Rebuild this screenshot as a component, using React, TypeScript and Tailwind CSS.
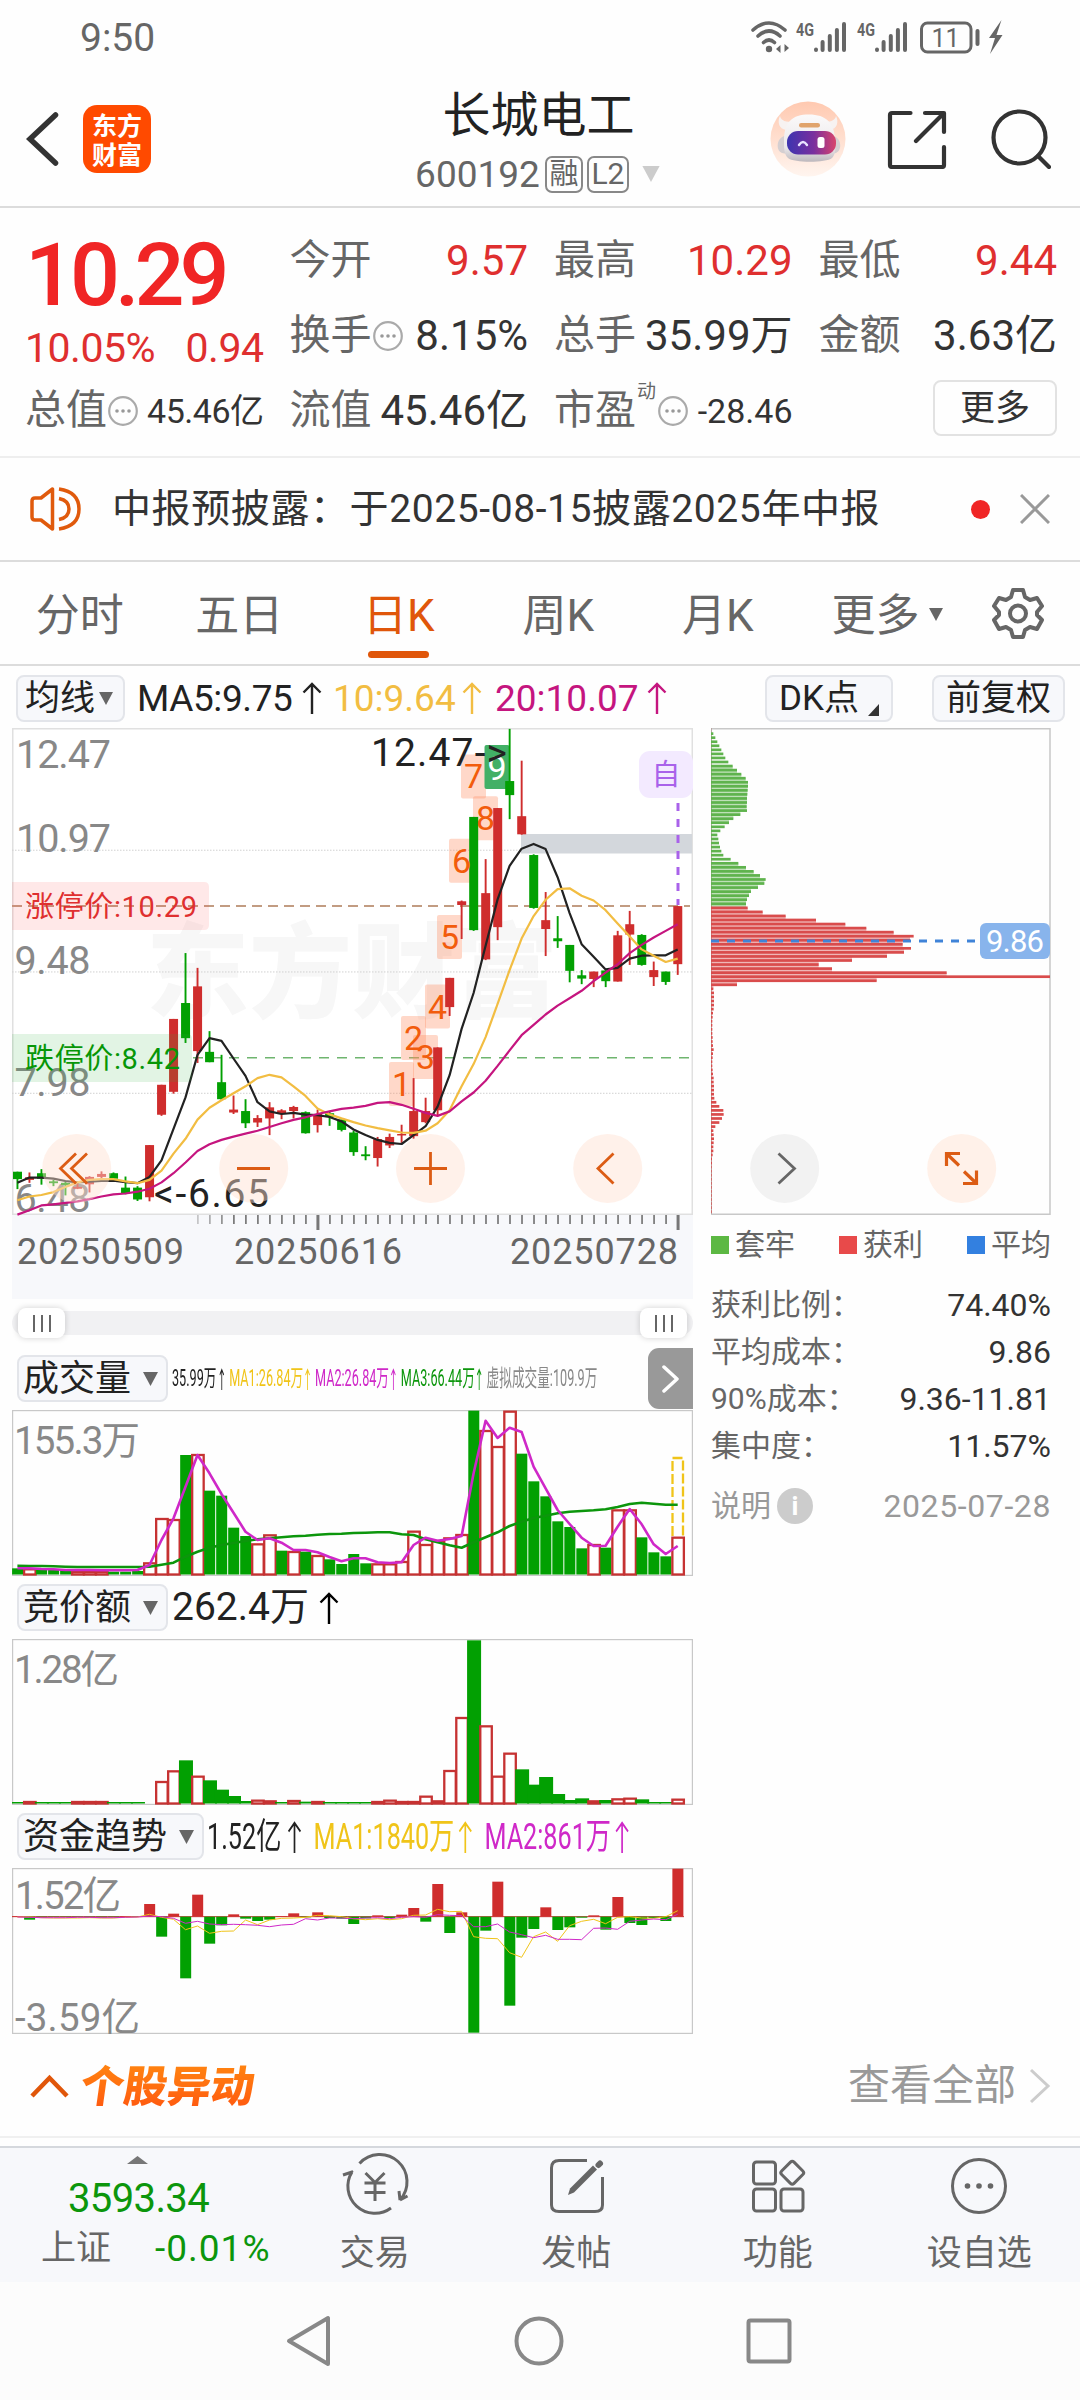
import type { ReactNode } from "react";

type Candle = [dir: "r" | "g", top: number, bottom: number, high: number, low: number];

const STEP = 12.005;
const cx = (i: number) => 17.4 + i * STEP;

const candles: Candle[] = [
  ["g", 1221, 1241, 1221, 1268], ["r", 1236, 1243, 1223, 1251], ["g", 1225, 1240, 1214, 1256],
  ["g", 1247, 1252, 1243, 1260], ["g", 1251, 1257, 1248, 1285], ["r", 1262, 1267, 1250, 1268],
  ["r", 1235, 1255, 1233, 1277], ["r", 1227, 1235, 1220, 1240], ["g", 1225, 1240, 1223, 1240],
  ["g", 1264, 1280, 1234, 1282], ["g", 1264, 1296, 1260, 1300], ["r", 1149, 1290, 1149, 1301],
  ["r", 986, 1067, 986, 1070], ["r", 808, 1005, 808, 1010], ["g", 765, 860, 630, 873],
  ["r", 720, 895, 670, 927], ["g", 897, 925, 841, 925], ["g", 979, 1025, 905, 1027],
  ["r", 1053, 1061, 1015, 1065], ["g", 1057, 1090, 1025, 1103], ["r", 1076, 1088, 1068, 1100],
  ["r", 1047, 1077, 1033, 1122], ["r", 1055, 1063, 1052, 1079], ["r", 1046, 1057, 1043, 1077],
  ["g", 1060, 1117, 1058, 1118], ["r", 1065, 1095, 1053, 1115], ["g", 1063, 1073, 1058, 1097],
  ["g", 1080, 1108, 1080, 1112], ["g", 1115, 1168, 1110, 1178], ["g", 1174, 1179, 1152, 1190],
  ["r", 1133, 1184, 1127, 1207], ["r", 1127, 1150, 1118, 1157], ["r", 1119, 1123, 1094, 1143],
  ["r", 1057, 1125, 968, 1132], ["r", 1057, 1087, 1021, 1090], ["r", 885, 1055, 885, 1068],
  ["r", 697, 776, 697, 800], ["r", 490, 500, 488, 592], ["g", 262, 568, 262, 570],
  ["r", 468, 647, 376, 649], ["r", 238, 560, 238, 595], ["g", 165, 203, 24, 268],
  ["r", 260, 309, 110, 310], ["g", 365, 508, 363, 510], ["r", 541, 565, 465, 638],
  ["g", 590, 598, 530, 616], ["g", 608, 678, 608, 709], ["g", 690, 699, 676, 714],
  ["r", 680, 700, 680, 722], ["g", 677, 706, 677, 722], ["r", 582, 707, 570, 707],
  ["r", 552, 580, 516, 662], ["g", 581, 662, 579, 664], ["r", 676, 695, 653, 719],
  ["g", 680, 708, 680, 716], ["r", 503, 660, 503, 689],
];

const ma5 = [
  1251, 1237, 1237, 1240, 1246, 1250, 1248, 1246, 1245, 1249, 1252, 1235, 1190, 1105, 1020, 905, 860, 867, 915,
  962, 1033, 1058, 1065, 1062, 1067, 1068, 1073, 1085, 1107, 1122, 1135, 1143, 1146, 1122, 1098, 1045, 960, 835,
  738, 610, 485, 394, 348, 335, 349, 425, 522, 606, 640, 674, 670, 645, 637, 636, 636, 620,
];
const ma10 = [
  1298, 1288, 1284, 1276, 1262, 1250, 1243, 1241, 1241, 1247, 1252, 1243, 1218, 1172, 1132, 1080, 1048, 1028,
  1009, 990, 968, 959, 966, 990, 1016, 1050, 1066, 1077, 1087, 1096, 1103, 1109, 1115, 1116, 1110, 1090, 1055,
  990, 930, 857, 767, 676, 591, 530, 486, 457, 455, 475, 488, 514, 550, 585, 620, 637, 654, 645,
];
const ma20 = [
  1337, 1325, 1312, 1309, 1305, 1301, 1295, 1288, 1282, 1280, 1275, 1267, 1250, 1225, 1196, 1165, 1147, 1135,
  1126, 1118, 1110, 1100, 1090, 1081, 1074, 1065, 1058, 1051, 1048, 1043, 1035, 1033, 1040, 1051, 1062, 1070,
  1058, 1031, 1007, 975, 935, 893, 852, 824, 796, 772, 752, 732, 706, 683, 660, 630, 608, 588, 570, 552,
];

const directions = "grgggrrrgggrrrgrggggrrgrgrggggrrrrrrrrgrrrggggggrgrrgggr";

const volume = [
  835, 835, 838, 838, 838, 843, 843, 843, 845, 845, 843, 817, 684, 687, 495, 492, 602, 617, 713, 738, 760, 733,
  782, 783, 785, 795, 808, 822, 792, 820, 820, 820, 813, 722, 762, 750, 742, 732, 362, 420, 468, 362, 491, 574,
  619, 694, 711, 775, 762, 773, 658, 658, 742, 787, 799, 740,
];
const volumeMa = [
  835, 835, 837, 838, 840, 840, 840, 841, 841, 841, 840, 825, 750, 685, 590, 495, 550, 612, 668, 725, 750, 745,
  758, 780, 780, 787, 801, 814, 805, 805, 817, 819, 817, 765, 743, 752, 747, 738, 550, 392, 444, 413, 426, 530,
  595, 660, 702, 743, 768, 767, 710, 657, 703, 763, 792, 768,
];
const volumeMa3 = [
  827, 828, 828, 829, 830, 831, 831, 831, 831, 831, 831, 830, 824, 818, 800, 785, 773, 765, 759, 753, 748, 745,
  742, 739, 737, 734, 732, 731, 729, 728, 727, 727, 733, 735, 748, 757, 766, 773, 757, 742, 727, 708, 695, 684,
  677, 670, 665, 663, 661, 658, 651, 642, 638, 641, 644, 644,
];

const auction = [
  666, 666, 666, 666, 666, 666, 666, 666, 666, 666, 666, 0, 606, 574, 541, 590, 601, 629, 648, 663, 662, 664,
  666, 663, 665, 666, 666, 666, 666, 666, 666, 662, 666, 666, 650, 664, 573, 414, 181, 439, 590, 521, 568, 614,
  591, 642, 660, 655, 664, 660, 658, 656, 658, 666, 666, 659,
];

const fund = [
  1008, 1019, 1013, 1011, 1011, 1011, 1012, 1013, 1012, 1008, 1011, 972, 1070, 1001, 1195, 944, 1091, 1036, 1003,
  1016, 1023, 1019, 1008, 1000, 1012, 997, 1014, 1016, 1032, 1015, 1006, 1014, 1004, 984, 1025, 912, 1059, 997,
  1358, 1052, 905, 1277, 1073, 1047, 982, 1050, 1042, 1013, 1006, 1049, 951, 1029, 1035, 1014, 1023, 866,
];
const fundMa1 = [
  1011, 1011, 1013, 1014, 1014, 1014, 1013, 1014, 1014, 1012, 1011, 1003, 1012, 1018, 1049, 1038, 1060, 1054,
  1053, 1020, 1034, 1020, 1015, 1014, 1012, 1006, 1007, 1010, 1016, 1019, 1016, 1019, 1016, 1006, 1005, 988, 995,
  994, 1070, 1075, 1076, 1118, 1132, 1070, 1056, 1084, 1037, 1024, 1018, 1031, 1012, 1010, 1014, 1015, 1010, 992,
];
const fundMa2 = [
  1011, 1012, 1013, 1013, 1013, 1012, 1012, 1013, 1013, 1012, 1011, 1008, 1010, 1015, 1030, 1024, 1032, 1034,
  1033, 1034, 1036, 1040, 1035, 1033, 1016, 1020, 1014, 1014, 1016, 1014, 1013, 1016, 1012, 1010, 1012, 1004,
  1006, 1007, 1040, 1040, 1032, 1056, 1064, 1073, 1066, 1078, 1078, 1079, 1045, 1044, 1048, 1024, 1020, 1017,
  1019, 1003,
];

const chips = [
  7, 13, 19, 25, 31, 37, 43, 52, 65, 78, 91, 104, 111, 111, 110, 109, 108, 108, 107, 108, 88, 67, 54, 41, 28, 19,
  22, 24, 27, 31, 37, 59, 82, 105, 128, 147, 164, 160, 141, 120, 114, 108, 105, 110, 155, 224, 315, 403, 466,
  548, 608, 597, 575, 600, 579, 528, 423, 323, 363, 707, 1017, 497, 78, 7, 9, 9, 9, 9, 8, 6, 5, 4, 4, 4, 4, 5, 5,
  6, 8, 6, 5, 4, 4, 5, 6, 8, 8, 9, 9, 9, 10, 16, 25, 37, 38, 33, 25, 13, 7, 8, 9, 8, 7, 7, 5, 3, 3, 2, 2, 2, 2,
  2, 2, 2, 2, 2, 2, 2, 2,
];

const marks = [
  { n: 1, x: 389, y: 1062 }, { n: 2, x: 401, y: 1016 }, { n: 3, x: 413, y: 1035 },
  { n: 4, x: 425, y: 984.5 }, { n: 5, x: 437, y: 915 }, { n: 6, x: 449, y: 838.8 },
  { n: 7, x: 461, y: 754.4 }, { n: 8, x: 473, y: 796.2 }, { n: 9, x: 484.5, y: 745 },
];

const py = (v: number) => 720 + v / 2.703;
const line = (data: number[], y: (v: number) => number) =>
  data.map((v, i) => `${cx(i).toFixed(1)},${y(v).toFixed(1)}`).join(" ");

const RED = "#cf2d2d";
const GREEN = "#02a002";

function Ellipsis() {
  return (
    <svg className="w-[30px] h-[30px] shrink-0" viewBox="0 0 30 30" fill="none">
      <circle cx="15" cy="15" r="13.8" stroke="#aaa" strokeWidth="2.2" />
      <circle cx="9" cy="15" r="1.8" fill="#999" />
      <circle cx="15" cy="15" r="1.8" fill="#999" />
      <circle cx="21" cy="15" r="1.8" fill="#999" />
    </svg>
  );
}

function Up() {
  return (
    <svg className="w-[20px] h-[32px] shrink-0" viewBox="0 0 20 32" fill="none" stroke="currentColor" strokeWidth="2.4">
      <path d="M10 32V2M1.500 10.500 10 2l8.500 8.500" />
    </svg>
  );
}

function SmallUp() {
  return (
    <svg className="w-[9px] h-[22px] shrink-0" viewBox="0 0 9 22" fill="none" stroke="currentColor" strokeWidth="1.500">
      <path d="M4.500 22V1.500M.8 7l3.700-5.500L8.200 7" />
    </svg>
  );
}

function Down({ className }: { className: string }) {
  return (
    <svg className={className} viewBox="0 0 14 13">
      <path d="M0 0h14L7 13z" fill="currentColor" />
    </svg>
  );
}

function StatusBar() {
  return (
    <div className="flex h-[76px] items-center justify-between pl-[80px] pr-[76px] text-[#666]">
      <span className="text-[39px]">9:50</span>
      <svg className="w-[254px] h-[38px]" viewBox="750 18 254 38" fill="none" stroke="#666" strokeWidth="3">
        <g strokeWidth="3.600" strokeLinecap="round">
          <path d="M753 29q16-14 32 0M758 35q11-10 22 0M763.500 41.500q5.500-5 11 0" />
        </g>
        <circle cx="769" cy="48" r="3.200" fill="#666" stroke="none" />
        <path d="M776 48l4.500-4v8zM789 47l-4.500-4v8z" fill="#666" stroke="none" />
        {[0, 61].map((dx) => (
          <g key={dx} strokeLinecap="round" strokeWidth="4">
            <path d={`M${816 + dx} 48.500v.5M${822.6 + dx} 41v8M${829.8 + dx} 35v14M${836.9 + dx} 29v20M${844 + dx} 23v26`} />
            <text
              x={796 + dx}
              y="34.500"
              fontSize="18.500"
              fontWeight="700"
              fill="#666"
              stroke="none"
              textLength="18"
              lengthAdjust="spacingAndGlyphs"
            >
              4G
            </text>
          </g>
        ))}
        <rect x="921.5" y="22" width="49.500" height="29" rx="6" />
        <path d="M977.500 30v13" strokeWidth="4" strokeLinecap="round" />
        <text x="945.500" y="45.500" fontSize="25" fill="#666" stroke="none" textAnchor="middle">
          11
        </text>
        <path d="M1001.500 19 989 37h6l-5 16 12.500-19h-6z" fill="#666" stroke="none" />
      </svg>
    </div>
  );
}

function Robot() {
  return (
    <svg className="w-[76px] h-[76px]" viewBox="0 0 76 76">
      <defs>
        <linearGradient id="halo" x1="0" y1="0" x2="0" y2="1">
          <stop offset="0" stopColor="#ffc9b0" />
          <stop offset="1" stopColor="#fff5ef" />
        </linearGradient>
        <linearGradient id="visor">
          <stop offset="0" stopColor="#3d35b0" />
          <stop offset=".55" stopColor="#7a2f9e" />
          <stop offset="1" stopColor="#d8446c" />
        </linearGradient>
        <linearGradient id="shell" x1="0" y1="0" x2="0" y2="1">
          <stop offset="0" stopColor="#fbfafa" />
          <stop offset=".7" stopColor="#ebe8ea" />
          <stop offset="1" stopColor="#bdb8bd" />
        </linearGradient>
      </defs>
      <circle cx="38" cy="38" r="37.500" fill="url(#halo)" />
      <path d="M16 29C9 28 7 21 10 15c1 5 6 6 14 6zM60 29c7-1 9-8 6-14-1 5-6 6-14 6z" fill="#f7f2f1" />
      <path d="M15 35c-8 1-10 14-3 17l5 1V35zM63 35c8 1 10 14 3 17l-5 1z" fill="#d5cfd1" />
      <path d="M14 40C14 21 22 13.500 39 13.500S65 22 65 40c1 8 0 14-3 17-6 5-38 5-44 0-4-4-4-10-4-17z" fill="url(#shell)" />
      <rect x="29" y="22" width="21" height="4.500" rx="2.200" fill="#e0a36c" />
      <rect x="17" y="30" width="49" height="23.500" rx="11" fill="url(#visor)" />
      <path d="M29 44q4-6 8 0" fill="none" stroke="#e9e4ff" strokeWidth="2.400" strokeLinecap="round" />
      <rect x="47.500" y="36" width="7" height="11" rx="2.500" fill="#fff" />
    </svg>
  );
}

function Header() {
  return (
    <div className="flex h-[132px] items-center justify-between border-b-2 border-[#dcdcdc] pl-[26px] pr-[29px]">
      <div className="mb-[5px] flex w-[330px] items-center">
        <svg className="w-[34px] h-[56px]" viewBox="0 0 34 56" fill="none" stroke="#333" strokeWidth="5.500" strokeLinecap="round">
          <path d="M29.500 4 4 28l25.500 24" />
        </svg>
        <div className="ml-[23px] flex h-[68px] w-[68px] flex-col items-center justify-center rounded-[14px] bg-[#ff4a00] font-['Noto_Sans_CJK_SC'] text-[25px] leading-[29px] font-bold text-white">
          <span>东方</span>
          <span>财富</span>
        </div>
      </div>
      <div className="mt-[4px] flex flex-col items-center">
        <h1 className="text-[48px] leading-[62px] text-[#222]">长城电工</h1>
        <div className="flex h-[54px] items-center text-[#666]">
          <span className="text-[37px]">600192</span>
          <span className="ml-[5px] flex h-[37px] w-[38px] items-center justify-center rounded-[7px] border-2 border-[#888] text-[29px] leading-none">
            融
          </span>
          <span className="ml-[4px] flex h-[37px] w-[42px] items-center justify-center rounded-[7px] border-2 border-[#888] text-[30px] leading-none">
            L2
          </span>
          <Down className="ml-[11px] w-[22px] h-[16px] text-[#ccc]" />
        </div>
      </div>
      <div className="mb-[5px] flex w-[330px] items-center justify-end">
        <Robot />
        <svg className="ml-[41px] w-[60px] h-[60px]" viewBox="0 0 60 60" fill="none" stroke="#333" strokeWidth="4.200" strokeLinecap="round" strokeLinejoin="round">
          <path d="M23.500 4H5q-2 0-2 2v50q0 2 2 2h50q2 0 2-2V38M38 4h19v19M56 5 29 32" />
        </svg>
        <svg className="ml-[44px] w-[60px] h-[60px]" viewBox="0 0 60 60" fill="none" stroke="#333" strokeWidth="4.200" strokeLinecap="round">
          <circle cx="28.500" cy="28.500" r="26" />
          <path d="M47 47 58 58" />
        </svg>
      </div>
    </div>
  );
}

interface StatProps {
  label: string;
  value: string;
  valueClass?: string;
  extra?: ReactNode;
}

function Stat({ label, value, valueClass = "text-[42px] text-[#333]", extra }: StatProps) {
  return (
    <div className="flex items-center justify-between whitespace-nowrap">
      <div className="flex items-center text-[41px] text-[#666]">
        {label}
        {extra}
      </div>
      <span className={valueClass}>{value}</span>
    </div>
  );
}

function Quote() {
  const red = "text-[42px] text-[#df2f2f]";
  return (
    <div className="grid h-[250px] grid-cols-4 grid-rows-[75px_75px_75px] gap-x-[26px] border-b-2 border-[#eee] pl-[25px] pr-[23px] pt-[15px]">
      <div className="row-span-2 flex flex-col">
        <span className="mt-[12px] text-[88px] leading-[80px] font-medium tracking-[-5px] text-[#f02525]">10.29</span>
        <div className="mt-[12px] flex justify-between text-[41px] leading-[42px] tracking-[-0.500px] text-[#df2f2f]">
          <span>10.05%</span>
          <span>0.94</span>
        </div>
      </div>
      <Stat label="今开" value="9.57" valueClass={red} />
      <Stat label="最高" value="10.29" valueClass={red} />
      <Stat label="最低" value="9.44" valueClass={red} />
      <Stat label="换手" value="8.15%" extra={<span className="ml-[1px]"><Ellipsis /></span>} />
      <Stat label="总手" value="35.99万" />
      <Stat label="金额" value="3.63亿" />
      <Stat
        label="总值"
        value="45.46亿"
        valueClass="text-[34px] tracking-[-0.500px] text-[#333]"
        extra={<span className="ml-[1px]"><Ellipsis /></span>}
      />
      <Stat label="流值" value="45.46亿" />
      <Stat
        label="市盈"
        value="-28.46"
        valueClass="text-[34px] text-[#333]"
        extra={
          <>
            <span className="mb-[38px] ml-[1px] text-[19px] leading-none">动</span>
            <span className="ml-[2px]"><Ellipsis /></span>
          </>
        }
      />
      <div className="flex items-center justify-end">
        <button className="mb-[5px] h-[56px] w-[124px] rounded-[8px] border-2 border-[#e2e2e2] text-[35px] leading-none text-[#333]">
          更多
        </button>
      </div>
    </div>
  );
}

function Notice() {
  return (
    <div className="flex h-[104px] items-center border-b-2 border-[#dcdcdc] px-[30px]">
      <svg className="w-[52px] h-[46px]" viewBox="0 0 52 46" fill="none" stroke="#e05a0c" strokeWidth="3.500" strokeLinejoin="round">
        <path d="M22.500 3v40L11 34H5q-3 0-3-3V15q0-3 3-3h6z" />
        <path d="M29 3q20 3 20 20T29 43" />
        <path d="M29 12.500q10 2 10 10.500t-10 10.500" />
      </svg>
      <span className="ml-[30px] text-[39px] tracking-[0.600px] whitespace-nowrap text-[#333]">
        中报预披露：于2025-08-15披露2025年中报
      </span>
      <div className="ml-auto h-[19px] w-[19px] rounded-full bg-[#f02525]" />
      <svg className="ml-[30px] w-[30px] h-[30px]" viewBox="0 0 30 30" stroke="#999" strokeWidth="3">
        <path d="M1 1l28 28M29 1 1 29" />
      </svg>
    </div>
  );
}

function Tabs() {
  const tabs = ["分时", "五日", "日K", "周K", "月K"];
  return (
    <div className="flex h-[104px] items-center border-b-2 border-[#dcdcdc] text-[44px] text-[#666]">
      {tabs.map((tab) => (
        <div
          key={tab}
          className={
            tab === "日K"
              ? "relative flex h-full w-[159.5px] items-center justify-center pt-[5px] text-[#e0560a]"
              : "flex h-full w-[159.5px] items-center justify-center pt-[5px]"
          }
        >
          {tab}
          {tab === "日K" && <div className="absolute bottom-[6px] h-[7px] w-[61px] rounded-full bg-[#e0560a]" />}
        </div>
      ))}
      <div className="ml-[34px] flex items-center pt-[5px]">
        更多
        <Down className="ml-[9px] mb-[3px] w-[14px] h-[13px]" />
      </div>
      <svg className="ml-[49px] w-[52px] h-[52px]" viewBox="0 0 52 52" fill="none" stroke="#666" strokeWidth="4" strokeLinejoin="round">
        <path d="M21 3h10l2 7 5 3 7-2 5 8-5 6v3l5 5-5 9-7-2-5 3-2 7H21l-2-7-5-3-7 2-5-9 5-5v-3l-5-6 5-8 7 2 5-3z" />
        <circle cx="26" cy="26.500" r="8" />
      </svg>
    </div>
  );
}

const chip = "flex h-[47px] shrink-0 items-center rounded-[8px] border-2 border-[#e3e5ea] bg-[#f7f8fb] text-[#222] whitespace-nowrap leading-none";

function MaRow() {
  return (
    <div className="flex h-[62px] items-center pl-[16px] pr-[15px] pt-[2px] text-[37px]">
      <div className={`${chip} w-[109px] pl-[7px] text-[35px]`}>
        均线
        <Down className="ml-[4px] w-[14px] h-[13px] text-[#666]" />
      </div>
      <div className="ml-[12px] flex items-center text-[#222]">
        <span className="w-[165px] tracking-[-0.400px]">MA5:9.75</span>
        <Up />
      </div>
      <div className="ml-[11px] flex items-center text-[#f2bd42]">
        <span className="w-[129px]">10:9.64</span>
        <Up />
      </div>
      <div className="ml-[13px] flex items-center text-[#c5157f]">
        <span className="w-[152px]">20:10.07</span>
        <Up />
      </div>
      <div className={`${chip} ml-auto w-[128px] pl-[12px] text-[35px]`}>
        DK点
        <svg className="mt-[24px] ml-[9px] w-[11px] h-[12px]" viewBox="0 0 11 12">
          <path d="M11 0v12H0z" fill="#333" />
        </svg>
      </div>
      <div className={`${chip} ml-[39px] w-[133px] justify-center text-[35px]`}>前复权</div>
    </div>
  );
}

function KLineChart() {
  return (
    <svg className="block w-[681px] h-[571px]" viewBox="12 728 681 571">
      <rect x="12" y="1215" width="681" height="84" fill="#f7f8fb" />
      <rect x="12.750" y="728.750" width="679.500" height="485.500" fill="#fff" stroke="#e0e0e0" strokeWidth="1.500" />
      <text
        x="146"
        y="1010"
        fontSize="103"
        fontWeight="900"
        fill="#f7f7f7"
        textLength="412"
        fontFamily="Noto Sans CJK SC"
      >
        东方财富
      </text>
      {[352, 681, 1009].map((v) => (
        <path key={v} d={`M12 ${py(v)}H692`} stroke="#d0d0d0" strokeWidth="1" strokeDasharray="1.500 1.500" />
      ))}
      <rect x="521" y="834" width="171" height="19.500" fill="#d3d7dc" />
      <path d={`M12 ${py(503)}H690`} stroke="#c29c82" strokeWidth="2" strokeDasharray="10 6" />
      <path d={`M193 ${py(913)}H690`} stroke="#6fb56f" strokeWidth="1.700" strokeDasharray="10 8" />
      <g fill="#888" fontSize="39.500">
        <text x="16" y="768" textLength="95">12.47</text>
        <text x="16" y="852" textLength="95">10.97</text>
        <text x="14.500" y="974" textLength="76">9.48</text>
        <text x="14.500" y="1096" textLength="76">7.98</text>
        <text x="14.500" y="1212" textLength="76">6.48</text>
      </g>
      {marks.map(({ n, x, y }) => (
        <rect
          key={n}
          x={x}
          y={y}
          width="25"
          height="44"
          rx="2"
          fill={n === 9 ? "#42b066" : "#ff8a5a"}
          fillOpacity={n === 9 ? 1 : 0.33}
        />
      ))}
      {candles.map(([dir, top, bottom, high, low], i) => (
        <g key={i} fill={dir === "r" ? RED : GREEN}>
          <rect x={cx(i) - 0.9} y={py(high)} width="1.900" height={py(low) - py(high)} />
          <rect x={cx(i) - 4.4} y={py(top)} width="9" height={py(bottom) - py(top)} />
        </g>
      ))}
      <g fontSize="34" textAnchor="middle">
        {marks.map(({ n, x, y }) => (
          <text key={n} x={x + 12.5} y={n === 9 ? 780 : y + 34} fill={n === 9 ? "#fff" : "#f25c0c"}>
            {n}
          </text>
        ))}
      </g>
      <g fill="none" strokeWidth="2.200" strokeLinejoin="round">
        <polyline points={line(ma5, py)} stroke="#222" />
        <polyline points={line(ma10, py)} stroke="#f2bd42" />
        <polyline points={line(ma20, py)} stroke="#c5157f" />
      </g>
      <path d="M12 882H204q5 0 5 5v38q0 5-5 5H12z" fill="#ff4a4a" fillOpacity=".13" />
      <path d="M12 1034H187q5 0 5 5v38q0 5-5 5H12z" fill="#30b040" fillOpacity=".14" />
      <g fontSize="29">
        <text x="25" y="916.500" fill="#df2f2f" textLength="172">涨停价:10.29</text>
        <text x="25" y="1068.500" fill="#079607" textLength="155">跌停价:8.42</text>
      </g>
      <g fill="#222" fontSize="39">
        <text x="371" y="766" textLength="136">12.47-&gt;</text>
        <text x="154" y="1207" textLength="115">&lt;-6.65</text>
      </g>
      <rect x="639" y="751" width="54" height="47" rx="11" fill="#f3eaff" />
      <text x="666" y="785" fontSize="29" fill="#a962ea" textAnchor="middle">自</text>
      <path d="M678 803V905" stroke="#a962ea" strokeWidth="3" strokeDasharray="8 8" />
      {[76.7, 253.7, 430.5, 607.7].map((x) => (
        <circle key={x} cx={x} cy="1168.400" r="34.500" fill="#ffe0d0" fillOpacity=".45" />
      ))}
      <g fill="none" stroke="#dc5c14" strokeWidth="2.800">
        <path d="M76 1153.500 60.500 1168.500 76 1183.500M87 1153.500 71.500 1168.500 87 1183.500" />
        <path d="M237 1168.500h33M414 1168.500h33M430.500 1152v33" />
        <path d="M613.500 1153.500 598 1168.500l15.500 15" />
      </g>
      {candles.map((_, i) =>
        i > 14 ? (
          <path
            key={i}
            d={`M${cx(i) + 0.4} 1215v${i === 25 || i === 55 ? 15 : 9}`}
            stroke="#777"
            strokeWidth={i === 25 || i === 55 ? 3 : 1.7}
            opacity={Math.min(1, (i - 13) / 5)}
          />
        ) : null
      )}
      <g fill="#666" fontSize="36">
        <text x="17" y="1263.500" textLength="167">20250509</text>
        <text x="234" y="1263.500" textLength="168">20250616</text>
        <text x="510" y="1263.500" textLength="168">20250728</text>
      </g>
    </svg>
  );
}

function Slider() {
  return (
    <div className="flex h-[48px] items-center">
      <div className="flex h-[24px] w-[681px] items-center justify-between rounded-full bg-[#f1f1f3] px-[6px]">
        {[0, 1].map((i) => (
          <div key={i} className="flex h-[30px] w-[47px] items-center justify-center gap-[6px] rounded-[8px] bg-white shadow-[0_0_6px_rgba(0,0,0,0.18)]">
            <div className="h-[17px] w-[2px] bg-[#666]" />
            <div className="h-[17px] w-[2px] bg-[#666]" />
            <div className="h-[17px] w-[2px] bg-[#666]" />
          </div>
        ))}
      </div>
    </div>
  );
}

function VolumeChart() {
  const y = (v: number) => 1290 + v / 3;
  const bottom = 1574.5;
  return (
    <svg className="block w-[681px] h-[166px]" viewBox="12 1410 681 166">
      <rect x="12.600" y="1410.600" width="679.800" height="164.800" fill="none" stroke="#c8c8c8" strokeWidth="1.200" />
      <text x="14" y="1454" fontSize="38.500" fill="#888" textLength="126">155.3万</text>
      {volume.map((v, i) =>
        directions[i] === "g" ? (
          <rect key={i} x={cx(i) - 5.3} y={y(v)} width="11" height={bottom - y(v)} fill={GREEN} />
        ) : (
          <rect key={i} x={cx(i) - 5.3} y={y(v) + 1} width="11.500" height={bottom - y(v) - 1} fill="#fff" stroke="#c63232" strokeWidth="2.300" />
        )
      )}
      <path d="M672.500 1536V1458H683V1536" fill="none" stroke="#f0c419" strokeWidth="2.300" strokeDasharray="10 3" />
      <g fill="none" strokeWidth="2.600" strokeLinejoin="round">
        <polyline points={line(volumeMa3, y)} stroke="#0c960c" />
        <polyline points={line(volumeMa, y)} stroke="#cf28c8" />
      </g>
    </svg>
  );
}

function AuctionChart() {
  const y = (v: number) => 1580 + v / 3;
  const bottom = 1803.5;
  return (
    <svg className="block w-[681px] h-[166px]" viewBox="12 1639 681 166">
      <rect x="12.600" y="1639.600" width="679.800" height="164.800" fill="none" stroke="#c8c8c8" strokeWidth="1.200" />
      <text x="14" y="1683" fontSize="38.500" fill="#888" textLength="105">1.28亿</text>
      {auction.map((v, i) =>
        v === 0 ? null : directions[i] === "g" ? (
          <rect key={i} x={cx(i) - 6.5} y={y(v)} width="14" height={bottom - y(v)} fill={GREEN} />
        ) : (
          <rect key={i} x={cx(i) - 5.3} y={y(v)} width="11.500" height={bottom - y(v)} fill="#fff" stroke="#c63232" strokeWidth="2.300" />
        )
      )}
    </svg>
  );
}

function FundChart() {
  const y = (v: number) => 1580 + v / 3;
  const zero = y(1010);
  return (
    <svg className="block w-[681px] h-[166px]" viewBox="12 1868 681 166">
      <rect x="12.600" y="1868.600" width="679.800" height="164.800" fill="none" stroke="#c8c8c8" strokeWidth="1.200" />
      <text x="15" y="1909" fontSize="38.500" fill="#888" textLength="106">1.52亿</text>
      <text x="15" y="2031" fontSize="38.500" fill="#888" textLength="125">-3.59亿</text>
      <path d={`M12 ${zero}H684`} stroke="#c63232" strokeWidth="1" />
      {fund.map((v, i) => (
        <rect
          key={i}
          x={cx(i) - 5.3}
          y={Math.min(y(v), zero)}
          width="11"
          height={Math.abs(y(v) - zero)}
          fill={v > 1010 ? GREEN : RED}
        />
      ))}
      <g fill="none" strokeWidth="1">
        <polyline points={line(fundMa1, y)} stroke="#f0c419" />
        <polyline points={line(fundMa2, y)} stroke="#cf28c8" />
      </g>
    </svg>
  );
}

function ChipChart() {
  return (
    <svg className="block w-[340px] h-[487px]" viewBox="711 728 340 487">
      <path d="M711 728.800H1050V1214.300H711" fill="none" stroke="#c8c8c8" strokeWidth="1.500" />
      <path d="M711.500 728V1214" stroke="#b9a9a5" strokeWidth="1" />
      {chips.map((w, i) => (
        <g key={i} fill={i < 43 ? "#5fb34d" : "#d94c4c"}>
          {w > 60 && (
            <rect x="711" y={py(37 + i * 10.95)} width={Math.min(w, chips[i + 1]) / 3} height="4" fillOpacity=".4" />
          )}
          <rect x="711" y={py(37 + i * 10.95) - 1.4} width={w / 3} height="2.700" />
        </g>
      ))}
      <path d="M711 941H977" stroke="#3f83d8" strokeWidth="3" strokeDasharray="8 8" />
      <rect x="980" y="923" width="70" height="36" rx="6" fill="#88b4ec" />
      <text x="986" y="952" fontSize="31" fill="#fff" textLength="58">9.86</text>
      <circle cx="784.700" cy="1168.400" r="34.500" fill="#f2f2f2" />
      <circle cx="961.700" cy="1168.400" r="34.500" fill="#fff1e9" />
      <path d="M778.500 1153.500l16 15-16 15" fill="none" stroke="#666" strokeWidth="2.800" />
      <g fill="none" stroke="#dc5c14" strokeWidth="3.200">
        <path d="M960 1153.500H946.500V1166M947 1154l12 11.500M963 1183.500H976.500V1170.500M976 1183l-12-11.500" />
      </g>
    </svg>
  );
}

function ChipPanel() {
  const legend = [
    { label: "套牢", swatch: "h-[18px] w-[18px] bg-[#5cb843]" },
    { label: "获利", swatch: "h-[18px] w-[18px] bg-[#e84a4a]" },
    { label: "平均", swatch: "h-[18px] w-[18px] bg-[#3380e0]" },
  ];
  const rows = [
    ["获利比例：", "74.40%"],
    ["平均成本：", "9.86"],
    ["90%成本：", "9.36-11.81"],
    ["集中度：", "11.57%"],
  ];
  return (
    <div className="ml-[18px] w-[340px]">
      <ChipChart />
      <div className="mt-[7px] flex h-[46px] items-center justify-between text-[30px] text-[#666]">
        {legend.map(({ label, swatch }) => (
          <div key={label} className="flex items-center gap-[6px]">
            <div className={swatch} />
            {label}
          </div>
        ))}
      </div>
      <div className="mt-[13px]">
        {rows.map(([label, value]) => (
          <div key={label} className="flex h-[47px] items-center justify-between">
            <span className="text-[30px] text-[#666]">{label}</span>
            <span className="text-[32px] text-[#333]">{value}</span>
          </div>
        ))}
      </div>
      <div className="mt-[9px] flex h-[56px] items-center text-[#999]">
        <span className="text-[30px]">说明</span>
        <div className="ml-[6px] flex h-[36px] w-[36px] items-center justify-center rounded-full bg-[#ccc] text-[26px] leading-none font-bold text-white">
          i
        </div>
        <span className="ml-auto text-[32px] tracking-[0.600px]">2025-07-28</span>
      </div>
    </div>
  );
}

function Market() {
  return (
    <div className="flex h-[1318px] pl-[12px]">
      <div className="w-[681px]">
        <KLineChart />
        <Slider />
        <div className="flex h-[63px] items-center pl-[5px]">
          <div className={`${chip} w-[151px] pl-[4px] text-[36px]`}>
            成交量
            <Down className="ml-[12px] w-[15px] h-[14px] text-[#666]" />
          </div>
          <div className="ml-[4px] flex w-[435px] shrink-0 items-center">
            <div className="flex origin-left scale-x-[0.55] items-center text-[23px] whitespace-nowrap">
              <span className="flex w-[95px] shrink-0 items-center justify-between text-[#222]">35.99万<SmallUp /></span>
              <span className="ml-[9px] flex w-[147px] shrink-0 items-center justify-between text-[#f0c419]">MA1:26.84万<SmallUp /></span>
              <span className="ml-[9px] flex w-[147px] shrink-0 items-center justify-between text-[#cf28c8]">MA2:26.84万<SmallUp /></span>
              <span className="ml-[9px] flex w-[147px] shrink-0 items-center justify-between text-[#0c960c]">MA3:66.44万<SmallUp /></span>
              <span className="ml-[9px] text-[#888]">虚拟成交量:109.9万</span>
            </div>
          </div>
          <div className="ml-auto flex h-[61px] w-[45px] shrink-0 items-center justify-center rounded-l-[11px] bg-[#999]">
            <svg className="w-[17px] h-[28px]" viewBox="0 0 17 28" fill="none" stroke="#fff" strokeWidth="3.500" strokeLinecap="round" strokeLinejoin="round">
              <path d="M2 2l13 12L2 26" />
            </svg>
          </div>
        </div>
        <VolumeChart />
        <div className="flex h-[63px] items-center pl-[5px]">
          <div className={`${chip} w-[151px] pl-[4px] text-[36px]`}>
            竞价额
            <Down className="ml-[12px] w-[15px] h-[14px] text-[#666]" />
          </div>
          <span className="ml-[4px] mr-[10px] text-[39px] text-[#222]">262.4万</span>
          <Up />
        </div>
        <AuctionChart />
        <div className="flex h-[63px] items-center pl-[5px]">
          <div className={`${chip} w-[187px] pl-[4px] text-[36px]`}>
            资金趋势
            <Down className="ml-[12px] w-[15px] h-[14px] text-[#666]" />
          </div>
          <div className="ml-[3px] flex origin-left scale-x-[0.7] items-center text-[36px] whitespace-nowrap">
            <span className="mr-[9px] text-[#222]">1.52亿</span>
            <span className="text-[#222]"><Up /></span>
            <span className="mr-[6px] ml-[17px] text-[#f0c419]">MA1:1840万</span>
            <span className="text-[#f0c419]"><Up /></span>
            <span className="mr-[6px] ml-[17px] text-[#cf28c8]">MA2:861万</span>
            <span className="text-[#cf28c8]"><Up /></span>
          </div>
        </div>
        <FundChart />
      </div>
      <ChipPanel />
    </div>
  );
}

function Movements() {
  return (
    <div className="flex h-[92px] items-center border-b-2 border-[#f0f0f0] pr-[29px] pb-[10px] pl-[30px]">
      <svg className="w-[39px] h-[24px]" viewBox="0 0 39 24" fill="none" stroke="#e0560a" strokeWidth="4.500">
        <path d="M2 22 19.500 4 37 22" />
      </svg>
      <span className="mb-[4px] ml-[12px] -skew-x-[8deg] bg-linear-to-b from-[#ff8a10] to-[#ff5510] bg-clip-text font-['Noto_Sans_CJK_SC'] text-[43.500px] leading-[56px] font-black text-transparent">
        个股异动
      </span>
      <span className="ml-auto text-[42px] text-[#999]">查看全部</span>
      <svg className="ml-[13px] w-[22px] h-[36px]" viewBox="0 0 22 36" fill="none" stroke="#ccc" strokeWidth="3">
        <path d="M2 2l17 16L2 34" />
      </svg>
    </div>
  );
}

const actions = [
  {
    label: "交易",
    icon: (
      <>
        <path d="M15.500 7.500A27 27 0 0 1 56 44M56 44l7.500-4M56 44l-1-9" />
        <path d="M47 52A27 27 0 0 1 8 16M-1 19l9-3 .5.5" />
        <path d="M21.500 17 31 26.500 40.500 17M20.500 27h21M20.500 36.500h21M31 27v18" />
      </>
    ),
  },
  {
    label: "发帖",
    icon: (
      <>
        <path d="M42 4.500H14q-7.500 0-7.500 7.500v37q0 6.500 7.500 6.500h36q7.500 0 7.500-6.500V21" />
        <path d="M23 39l2-6.500 23-23 4 4-23 23z" fill="#666" stroke="none" />
        <path d="M53.500 9 55 7.500" strokeWidth="6" strokeLinecap="round" />
      </>
    ),
  },
  {
    label: "功能",
    icon: (
      <>
        <rect x="6.500" y="6" width="22" height="22" rx="3" />
        <rect x="6.500" y="33" width="22" height="22" rx="3" />
        <rect x="34" y="33" width="22" height="22" rx="3" />
        <rect x="36.500" y="8" width="17.500" height="17.500" rx="2.500" transform="rotate(45 45.250 16.750)" />
      </>
    ),
  },
  {
    label: "设自选",
    icon: (
      <>
        <circle cx="31" cy="30" r="26.500" />
        <g fill="#666" stroke="none">
          <circle cx="19.500" cy="30" r="2.800" />
          <circle cx="31" cy="30" r="2.800" />
          <circle cx="42.500" cy="30" r="2.800" />
        </g>
      </>
    ),
  },
];

function BottomBar() {
  return (
    <div className="mt-[8px] flex h-[136px] border-t-2 border-[#d5d8dd] bg-[#f7f8fb]">
      <div className="flex w-[274px] flex-col items-center pt-[8px]">
        <svg className="w-[21px] h-[8px]" viewBox="0 0 21 8">
          <path d="M0 8 10.500 0 21 8z" fill="#777" />
        </svg>
        <span className="mt-[9px] pl-[3px] text-[40px] leading-[52px] tracking-[-0.600px] text-[#0c960c]">3593.34</span>
        <div className="flex w-full items-center pl-[41px] leading-[48px]">
          <span className="text-[35px] text-[#666]">上证</span>
          <span className="ml-[44px] text-[37px] tracking-[1px] text-[#0c960c]">-0.01%</span>
        </div>
      </div>
      {actions.map(({ label, icon }) => (
        <div key={label} className="flex w-[201.5px] flex-col items-center pt-[8px]">
          <svg className="w-[62px] h-[60px] overflow-visible" viewBox="0 0 62 60" fill="none" stroke="#666" strokeWidth="3">
            {icon}
          </svg>
          <span className="mt-[13px] text-[35px] leading-[50px] text-[#666]">{label}</span>
        </div>
      ))}
    </div>
  );
}

function SystemNav() {
  return (
    <div className="flex h-[118px] items-center justify-between bg-[#fcfcfc] pl-[286px] pr-[288px]">
      <svg className="w-[45px] h-[52px]" viewBox="0 0 45 52" fill="none" stroke="#888" strokeWidth="4" strokeLinejoin="round">
        <path d="M42 3v46L3 26z" />
      </svg>
      <svg className="w-[50px] h-[50px]" viewBox="0 0 50 50" fill="none" stroke="#888" strokeWidth="4">
        <circle cx="25" cy="25" r="22.500" />
      </svg>
      <svg className="w-[46px] h-[46px]" viewBox="0 0 46 46" fill="none" stroke="#888" strokeWidth="4">
        <rect x="2.500" y="2.500" width="41" height="41" rx="2" />
      </svg>
    </div>
  );
}

export default function App() {
  return (
    <div className="flex h-[2400px] w-[1080px] flex-col overflow-hidden bg-[#fefefe] font-['Roboto','Noto_Sans_CJK_SC',sans-serif] leading-none">
      <StatusBar />
      <Header />
      <Quote />
      <Notice />
      <Tabs />
      <MaRow />
      <Market />
      <Movements />
      <BottomBar />
      <SystemNav />
    </div>
  );
}
